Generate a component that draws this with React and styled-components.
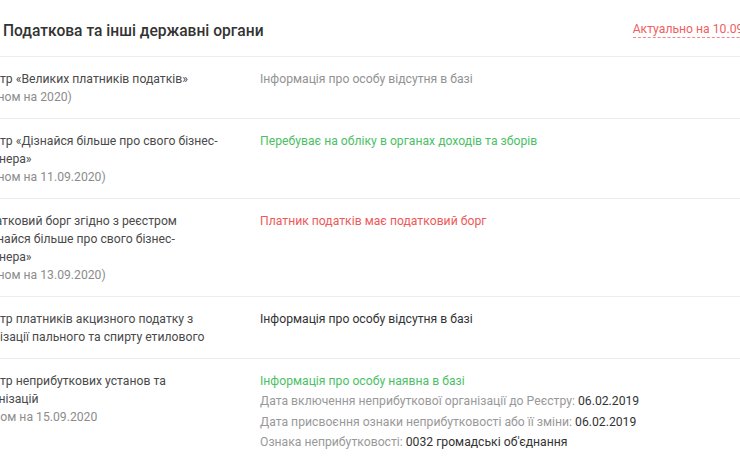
import React from 'react'
import styled, { createGlobalStyle } from 'styled-components'

const GlobalStyle = createGlobalStyle`
  html, body {
    margin: 0;
    padding: 0;
    background: #fff;
    overflow: hidden;
  }
  body {
    font-family: Roboto, "Liberation Sans", Arial, sans-serif;
  }
`

const Section = styled.section`
  width: 820px;
  margin-left: -27px;
`

const Header = styled.div`
  display: flex;
  align-items: center;
  justify-content: space-between;
  height: 57px;
  padding-left: 30px;
  box-sizing: border-box;
  border-bottom: 1px solid #ededed;
`

const Title = styled.h2`
  margin: 0;
  font-size: 15.6px;
  font-weight: 500;
  color: #333;
  padding-top: 5px;
`

const Actual = styled.span`
  font-size: 12.2px;
  color: #ef5f5f;
  border-bottom: 1px dashed #f08a8a;
  line-height: 16px;
  margin-right: 19px;
  padding-top: 3px;
`

const Row = styled.div`
  display: grid;
  grid-template-columns: 252px 1fr;
  column-gap: 35px;
  padding: 13px 0 12px;
  border-bottom: 1px solid #ededed;
  font-size: 12.2px;
  line-height: 18px;
  &:last-child {
    border-bottom: none;
  }
`

const Label = styled.div`
  color: #4a4a4a;
`

const Note = styled.div`
  color: #8c8c8c;
`

const Value = styled.div`
  color: ${p => ({ green: '#4cbf66', red: '#ee5a5a', grey: '#929292', dark: '#333' })[p.$tone || 'dark']};
  line-height: ${p => (p.$wide ? '20.4px' : '18px')};
  &:first-child {
    margin-top: ${p => (p.$wide ? '-1px' : '0')};
  }
`

const Muted = styled.span`
  color: #999;
`

const Dark = styled.span`
  color: #333;
`

const rows = [
  {
    label: 'Реєстр «Великих платників податків»',
    note: '(Станом на 2020)',
    value: [{ tone: 'grey', text: 'Інформація про особу відсутня в базі' }]
  },
  {
    label: 'Реєстр «Дізнайся більше про свого бізнес-партнера»',
    note: '(Станом на 11.09.2020)',
    value: [{ tone: 'green', text: 'Перебуває на обліку в органах доходів та зборів' }]
  },
  {
    label: 'Податковий борг згідно з реєстром «Дізнайся більше про свого бізнес-партнера»',
    note: '(Станом на 13.09.2020)',
    value: [{ tone: 'red', text: 'Платник податків має податковий борг' }]
  },
  {
    label: 'Реєстр платників акцизного податку з реалізації пального та спирту етилового',
    value: [{ tone: 'dark', text: 'Інформація про особу відсутня в базі' }]
  }
]

export default function App() {
  return (
    <>
      <GlobalStyle />
      <Section>
        <Header>
          <Title>Податкова та інші державні органи</Title>
          <Actual>Актуально на 10.09.2020</Actual>
        </Header>
        {rows.map((r, i) => (
          <Row key={i}>
            <div>
              <Label>{r.label}</Label>
              {r.note && <Note>{r.note}</Note>}
            </div>
            <div>
              {r.value.map((v, j) => (
                <Value key={j} $tone={v.tone}>{v.text}</Value>
              ))}
            </div>
          </Row>
        ))}
        <Row>
          <div>
            <Label>Реєстр неприбуткових установ та організацій</Label>
            <Note>Станом на 15.09.2020</Note>
          </div>
          <div>
            <Value $tone="green" $wide>Інформація про особу наявна в базі</Value>
            <Value $wide>
              <Muted>Дата включення неприбуткової організації до Реєстру: </Muted>
              <Dark>06.02.2019</Dark>
            </Value>
            <Value $wide>
              <Muted>Дата присвоєння ознаки неприбутковості або її зміни: </Muted>
              <Dark>06.02.2019</Dark>
            </Value>
            <Value $wide>
              <Muted>Ознака неприбутковості: </Muted>
              <Dark>0032 громадські об'єднання</Dark>
            </Value>
          </div>
        </Row>
      </Section>
    </>
  )
}
